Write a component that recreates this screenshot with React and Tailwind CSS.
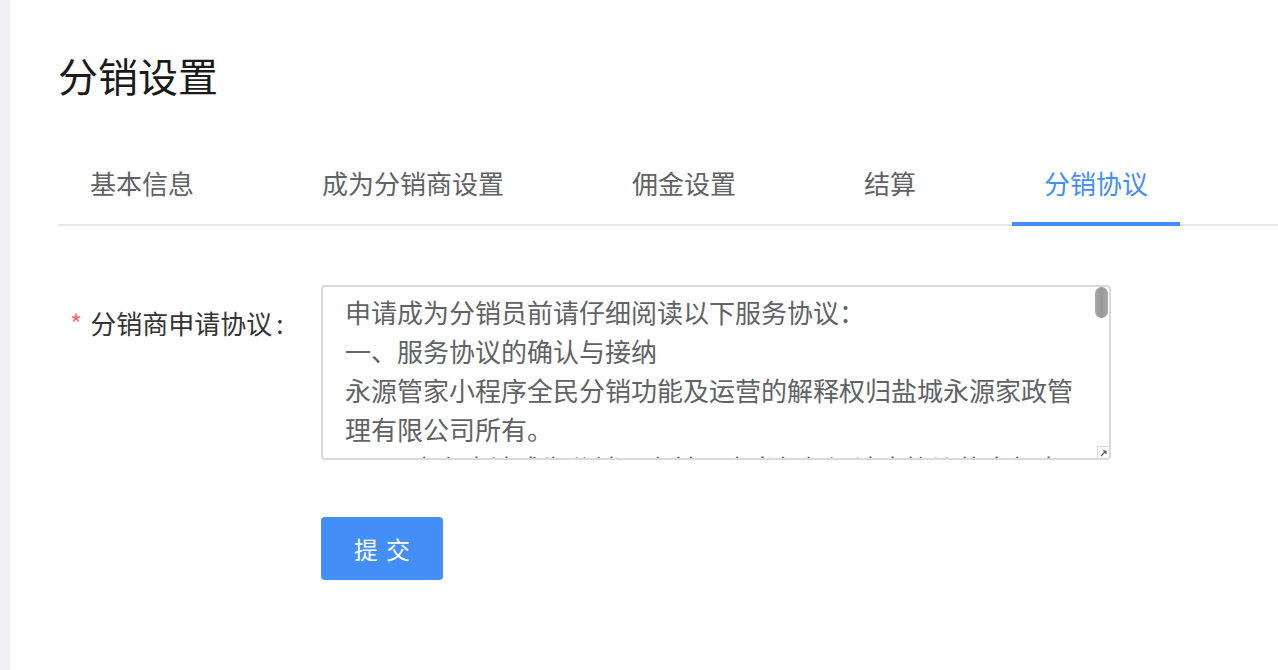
import React from "react";

const tabs = ["基本信息", "成为分销商设置", "佣金设置", "结算", "分销协议"];

export default function App() {
  const font = { fontFamily: '"Noto Sans CJK SC", "Noto Sans", sans-serif' };
  return (
    <div className="flex min-h-[670px] bg-white" style={font}>
      <div className="w-[10px] shrink-0 bg-[#eef0f5]" />
      <div className="flex-1 pl-[48px]">
        <h1 className="pt-[51px] text-[40px] leading-[48px] font-normal text-[#1a1a1a]">分销设置</h1>
        <div className="mt-[45px] flex gap-[64px] border-b-2 border-[#e4e7ed]">
          {tabs.map((t, i) => (
            <div
              key={t}
              className={`relative flex h-[80px] items-center px-[32px] pb-[3px] text-[26px] ${
                i === 4 ? "text-[#448ef7]" : "text-[#606266]"
              }`}
            >
              {t}
              {i === 4 && (
                <span className="absolute bottom-[-2px] left-0 right-0 h-[4px] bg-[#448ef7]" />
              )}
            </div>
          ))}
        </div>
        <div className="mt-[59px] flex">
          <div className="mt-[18px] w-[263px] pl-[12px] text-[26px] leading-[40px] text-[#333]">
            <span className="mr-[8px] text-[#f56c6c]">*</span>
            分销商申请协议<span className="ml-[4px]">:</span>
          </div>
          <div className="flex flex-col">
            <div className="relative h-[175px] w-[790px] overflow-hidden rounded-[4px] border-2 border-[#dadada] bg-white pl-[22px] pr-[20px] pt-[5px] text-[26px] leading-[39px] text-[#606266]">
              <p>申请成为分销员前请仔细阅读以下服务协议：</p>
              <p>一、服务协议的确认与接纳</p>
              <p>
                永源管家小程序全民分销功能及运营的解释权归盐城永源家政管理有限公司所有。
              </p>
              <p>1、用户在申请成为分销员之前，应当仔细阅读本协议的全部内容。</p>
              <span className="absolute right-[1px] top-[0px] h-[31px] w-[13px] rounded-full bg-gradient-to-r from-[#a8a8a8] via-[#999] to-[#a8a8a8]" />
              <span className="absolute bottom-0 right-0 flex h-[12px] w-[12px] items-end justify-end border-l border-t border-[#dcdcdc] bg-white">
                <svg width="8" height="8" viewBox="0 0 8 8" className="mb-[1px] mr-[1px]">
                  <path d="M1 7 L6 2 M3 2 H6 V5" stroke="#555" strokeWidth="1.2" fill="none" />
                </svg>
              </span>
            </div>
            <button className="mt-[57px] h-[63px] w-[122px] rounded-[4px] bg-[#448ef7] text-[24px] tracking-[8px] text-white">
              <span className="pl-[8px]">提交</span>
            </button>
          </div>
        </div>
      </div>
    </div>
  );
}
